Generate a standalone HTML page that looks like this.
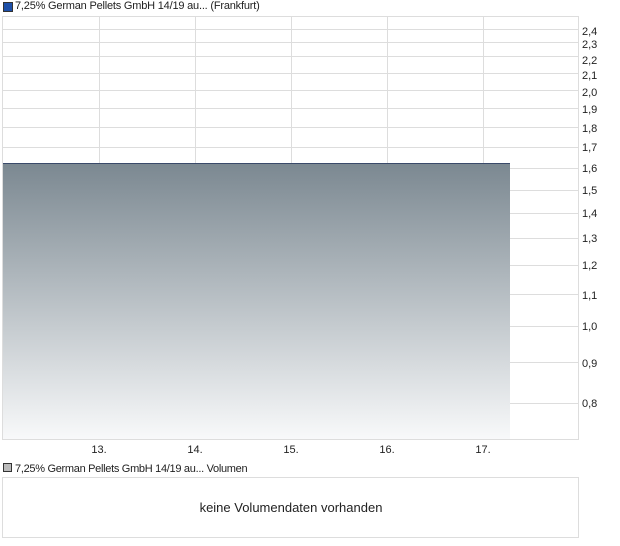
<!DOCTYPE html><html><head><style>
body{margin:0;width:620px;height:546px;background:#fff;font-family:"Liberation Sans",sans-serif;font-size:11px;color:#222;position:relative;overflow:hidden}
.a{position:absolute}
</style></head><body>
<div class="a" style="left:3px;top:2px;width:8px;height:8px;background:#1d4fa8;border:1px solid #333"></div>
<div class="a" style="left:15px;top:0px;font-size:11px;letter-spacing:-0.2px">7,25% German Pellets GmbH 14/19 au... (Frankfurt)</div>
<svg class="a" style="left:0;top:0" width="620" height="546">
<defs><linearGradient id="g" x1="0" y1="0" x2="0" y2="1"><stop offset="0" stop-color="#7b8891"/><stop offset="1" stop-color="#f8f9fa"/></linearGradient></defs>
<rect x="2.5" y="16.5" width="576" height="423" fill="#fff" stroke="#ddd"/>
<g stroke="#ddd">
<line x1="99.5" y1="17" x2="99.5" y2="440"/><line x1="195.5" y1="17" x2="195.5" y2="440"/><line x1="291.5" y1="17" x2="291.5" y2="440"/><line x1="387.5" y1="17" x2="387.5" y2="440"/><line x1="483.5" y1="17" x2="483.5" y2="440"/>
<line x1="3" x2="578" y1="29.5" y2="29.5"/><line x1="3" x2="578" y1="42.5" y2="42.5"/><line x1="3" x2="578" y1="56.5" y2="56.5"/><line x1="3" x2="578" y1="73.5" y2="73.5"/><line x1="3" x2="578" y1="90.5" y2="90.5"/><line x1="3" x2="578" y1="108.5" y2="108.5"/><line x1="3" x2="578" y1="127.5" y2="127.5"/><line x1="3" x2="578" y1="147.5" y2="147.5"/><line x1="3" x2="578" y1="168.5" y2="168.5"/><line x1="3" x2="578" y1="190.5" y2="190.5"/><line x1="3" x2="578" y1="213.5" y2="213.5"/><line x1="3" x2="578" y1="238.5" y2="238.5"/><line x1="3" x2="578" y1="265.5" y2="265.5"/><line x1="3" x2="578" y1="294.5" y2="294.5"/><line x1="3" x2="578" y1="326.5" y2="326.5"/><line x1="3" x2="578" y1="362.5" y2="362.5"/><line x1="3" x2="578" y1="403.5" y2="403.5"/>
</g>
<rect x="3" y="163" width="507" height="276" fill="url(#g)"/>
<line x1="3" x2="510" y1="163.5" y2="163.5" stroke="#3a4a6a"/>
<g font-family="Liberation Sans, sans-serif" font-size="11" fill="#222">
<text x="582" y="35">2,4</text><text x="582" y="48">2,3</text><text x="582" y="64">2,2</text><text x="582" y="79">2,1</text><text x="582" y="96">2,0</text><text x="582" y="113">1,9</text><text x="582" y="132">1,8</text><text x="582" y="151">1,7</text><text x="582" y="172">1,6</text><text x="582" y="194">1,5</text><text x="582" y="217">1,4</text><text x="582" y="242">1,3</text><text x="582" y="269">1,2</text><text x="582" y="299">1,1</text><text x="582" y="330">1,0</text><text x="582" y="367">0,9</text><text x="582" y="407">0,8</text>
<text x="99" y="453" text-anchor="middle">13.</text><text x="195" y="453" text-anchor="middle">14.</text><text x="291" y="453" text-anchor="middle">15.</text><text x="387" y="453" text-anchor="middle">16.</text><text x="483" y="453" text-anchor="middle">17.</text>
</g>
<rect x="3.5" y="463.5" width="8" height="8" fill="#bbb" stroke="#333"/>
<text x="15" y="472" font-family="Liberation Sans, sans-serif" font-size="11" letter-spacing="-0.3" fill="#222">7,25% German Pellets GmbH 14/19 au... Volumen</text>
<rect x="2.5" y="477.5" width="576" height="60" fill="#fff" stroke="#ddd"/>
<text x="291" y="512" text-anchor="middle" font-family="Liberation Sans, sans-serif" font-size="13" fill="#222">keine Volumendaten vorhanden</text>
</svg>
</body></html>
